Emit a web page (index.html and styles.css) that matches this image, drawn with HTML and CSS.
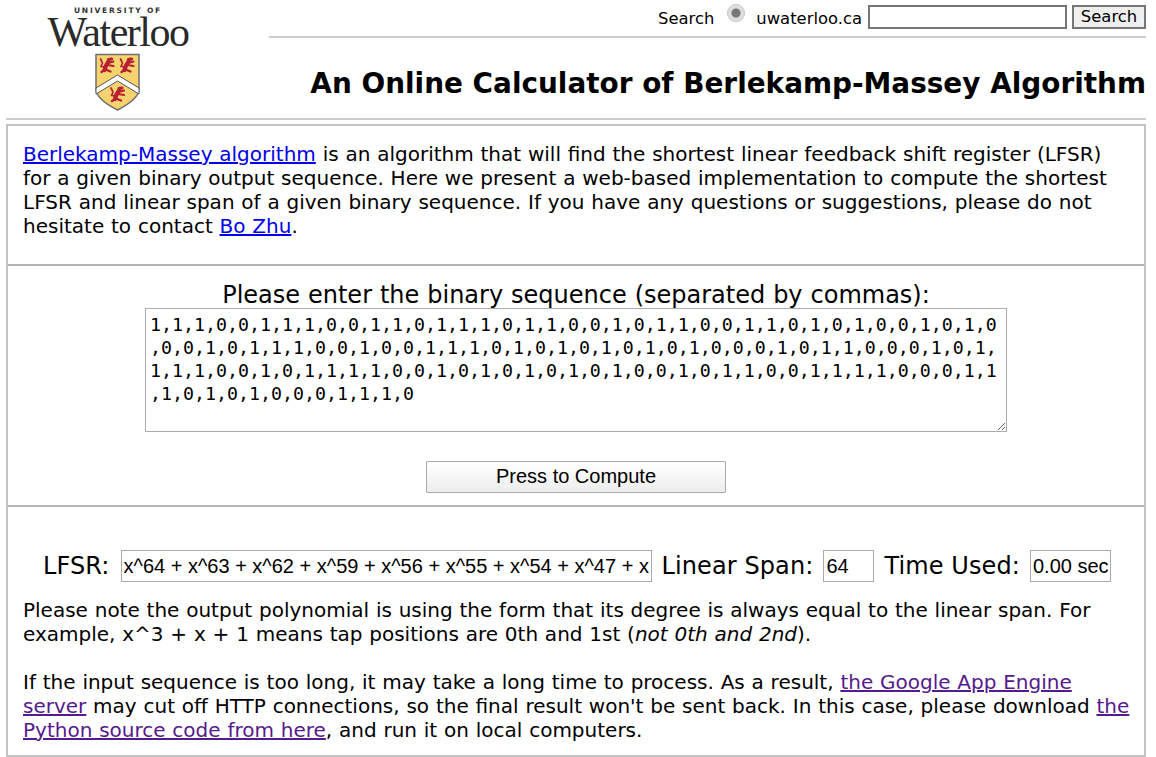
FILE: index.html
```html
<!DOCTYPE html>
<html lang="en">
<head>
<meta charset="utf-8">
<title>An Online Calculator of Berlekamp-Massey Algorithm</title>
<link rel="stylesheet" href="styles.css">
</head>
<body>
<header class="masthead">
  <svg class="logo" width="144" height="106" viewBox="0 0 144 106" role="img" aria-label="University of Waterloo">
    <defs>
      <g id="lion" fill="none" stroke="#b81f33" stroke-linecap="round" stroke-linejoin="round">
        <path d="M5.500 13L7 8.500L9.500 4.500" stroke-width="4.200"/>
        <path d="M9.500 2.500L12.500 2" stroke-width="3.200"/>
        <path d="M9 6L14.500 4.500M8.500 8L14.500 9" stroke-width="2"/>
        <path d="M5.500 10L2 9.500L3.500 6M3 5L1.500 2" stroke-width="1.700"/>
        <path d="M5.500 13L2.500 15M6.500 12.500L11.500 14.500" stroke-width="2.300"/>
      </g>
    </defs>
    <text class="logo-top" x="72" y="8" text-anchor="middle">UNIVERSITY OF</text>
    <text class="logo-name" x="72" y="41" text-anchor="middle">Waterloo</text>
    <path d="M50 49.500H93V84Q93 94 71.500 105Q50 94 50 84Z" fill="#f6d36e" stroke="#6f6f6f" stroke-width="1.500"/>
    <path d="M50 83L71.500 70L93 83V89L71.500 76L50 89Z" fill="#fff" stroke="#555" stroke-width="1"/>
    <use href="#lion" x="53" y="52"/>
    <use href="#lion" x="73" y="52"/>
    <use href="#lion" x="63.500" y="81"/>
  </svg>
  <div class="masthead-main">
    <form class="search">
      <span class="search-label">Search</span>
      <input class="radio" type="radio" checked>
      <span class="search-site">uwaterloo.ca</span>
      <input class="search-input" type="text">
      <button class="search-button" type="button">Search</button>
    </form>
    <hr class="rule">
    <h1 class="title">An Online Calculator of Berlekamp-Massey Algorithm</h1>
  </div>
</header>
<hr class="rule full">
<main class="panel">
  <section class="intro">
    <p><a href="#">Berlekamp-Massey algorithm</a> is an algorithm that will find the shortest linear feedback shift register (LFSR) for a given binary output sequence. Here we present a web-based implementation to compute the shortest LFSR and linear span of a given binary sequence. If you have any questions or suggestions, please do not hesitate to contact <a href="#">Bo Zhu</a>.</p>
  </section>
  <section class="entry">
    <label class="entry-label" for="seq">Please enter the binary sequence (separated by commas):</label>
    <textarea id="seq" class="sequence" spellcheck="false" wrap="off">1,1,1,0,0,1,1,1,0,0,1,1,0,1,1,1,0,1,1,0,0,1,0,1,1,0,0,1,1,0,1,0,1,0,0,1,0,1,0
,0,0,1,0,1,1,1,0,0,1,0,0,1,1,1,0,1,0,1,0,1,0,1,0,1,0,0,0,1,0,1,1,0,0,0,1,0,1,
1,1,1,0,0,1,0,1,1,1,1,0,0,1,0,1,0,1,0,1,0,1,0,0,1,0,1,1,0,0,1,1,1,1,0,0,0,1,1
,1,0,1,0,1,0,0,0,1,1,1,0</textarea>
    <button class="compute" type="button">Press to Compute</button>
  </section>
  <section class="result">
    <div class="fields">
      <label>LFSR:</label>
      <input class="field lfsr" type="text" value="x^64 + x^63 + x^62 + x^59 + x^56 + x^55 + x^54 + x^47 + x^46 + x^45">
      <label>Linear Span:</label>
      <input class="field span" type="text" value="64">
      <label>Time Used:</label>
      <input class="field time" type="text" value="0.00 sec">
    </div>
    <p>Please note the output polynomial is using the form that its degree is always equal to the linear span. For example, x^3 + x + 1 means tap positions are 0th and 1st (<em>not 0th and 2nd</em>).</p>
    <p>If the input sequence is too long, it may take a long time to process. As a result, <a class="seen" href="#">the Google App Engine server</a> may cut off HTTP connections, so the final result won't be sent back. In this case, please download <a class="seen" href="#">the Python source code from here</a>, and run it on local computers.</p>
  </section>
</main>
</body>
</html>
```
FILE: styles.css
```css
* { box-sizing: border-box; }
html, body { height: 100%; }
body {
  margin: 0;
  padding: 0 10px 0 6px;
  overflow: hidden;
  font-family: "DejaVu Sans", Verdana, sans-serif;
  font-size: 20px;
  line-height: 24px;
  color: #000;
  background: #fff;
}
a { color: #00e; }
a.seen { color: #551a8b; }
.masthead { display: flex; height: 118px; }
.logo { flex: none; margin: 5px 0 0 40px; }
.logo-top { font: bold 7.500px "DejaVu Sans", sans-serif; letter-spacing: 1.800px; fill: #333; }
.logo-name { font: 42px "Liberation Serif", serif; letter-spacing: -1.500px; fill: #2a2a2a; }
.masthead-main { flex: 1; margin-left: 79px; display: flex; flex-direction: column; }
.search { display: flex; align-items: center; justify-content: flex-end; height: 36px; padding-bottom: 2px; font-size: 16.400px; }
.search-label { margin: 3px 13px 0 0; }
.radio { appearance: none; width: 18px; height: 18px; margin: 0 11px 8px 0; border: 1px solid #c4c4c4; border-radius: 50%; background: radial-gradient(circle, #777 0, #777 4px, #d8d8d8 5px, #f0f0f0 100%); }
.search-site { margin: 3px 6px 0 0; }
.search-input { width: 199px; height: 24px; margin: 0 5px 0 0; border: 2px solid #767676; padding: 0; background: #fff; }
.search-button { width: 74px; height: 24px; padding: 0; border: 2px solid #767676; background: #efefef; font: 16.400px/20px "DejaVu Sans", sans-serif; color: #000; }
.rule { height: 2px; margin: 0; border: 0; background: #ccc; }
.title { margin: 29px 0 0; font-size: 27.900px; line-height: 34px; text-align: right; white-space: nowrap; }
.panel { margin-top: 4px; border: 2px solid #c4c4c4; height: 633px; }
.intro { height: 140px; padding: 16px 15px 0; border-bottom: 2px solid #b4b4b4; word-spacing: 0.450px; }
p { margin: 0; }
.entry { height: 241px; display: flex; flex-direction: column; align-items: center; padding-top: 16px; border-bottom: 2px solid #b4b4b4; font-size: 24px; }
.entry-label { line-height: 26px; word-spacing: 0.300px; }
.sequence { display: block; width: 862px; height: 124px; padding: 4px; border: 1px solid #aaa; font: 18.270px/23px "DejaVu Sans Mono", monospace; resize: both; overflow: hidden; }
.compute { width: 300px; height: 32px; margin-top: 29px; padding: 0 0 2px; border: 1px solid #aaa; border-radius: 1px; background: linear-gradient(#fff, #ededed); font: 20px "Liberation Sans", Arial, sans-serif; color: #000; }
.result { padding: 43px 12px 0 15px; word-spacing: 0.450px; }
.fields { display: flex; align-items: center; gap: 10px; margin: 0 0 16px 20px; font-size: 24px; white-space: nowrap; letter-spacing: 0.100px; word-spacing: 0; }
.field { flex: none; height: 32px; padding: 1px 2px; border: 1px solid #aaa; font: 20px "Liberation Sans", Arial, sans-serif; letter-spacing: 0; color: #000; }
.lfsr { width: 531px; margin-left: 1px; }
.span { width: 51px; }
.time { width: 81px; }
.result p + p { margin-top: 24px; }
```
